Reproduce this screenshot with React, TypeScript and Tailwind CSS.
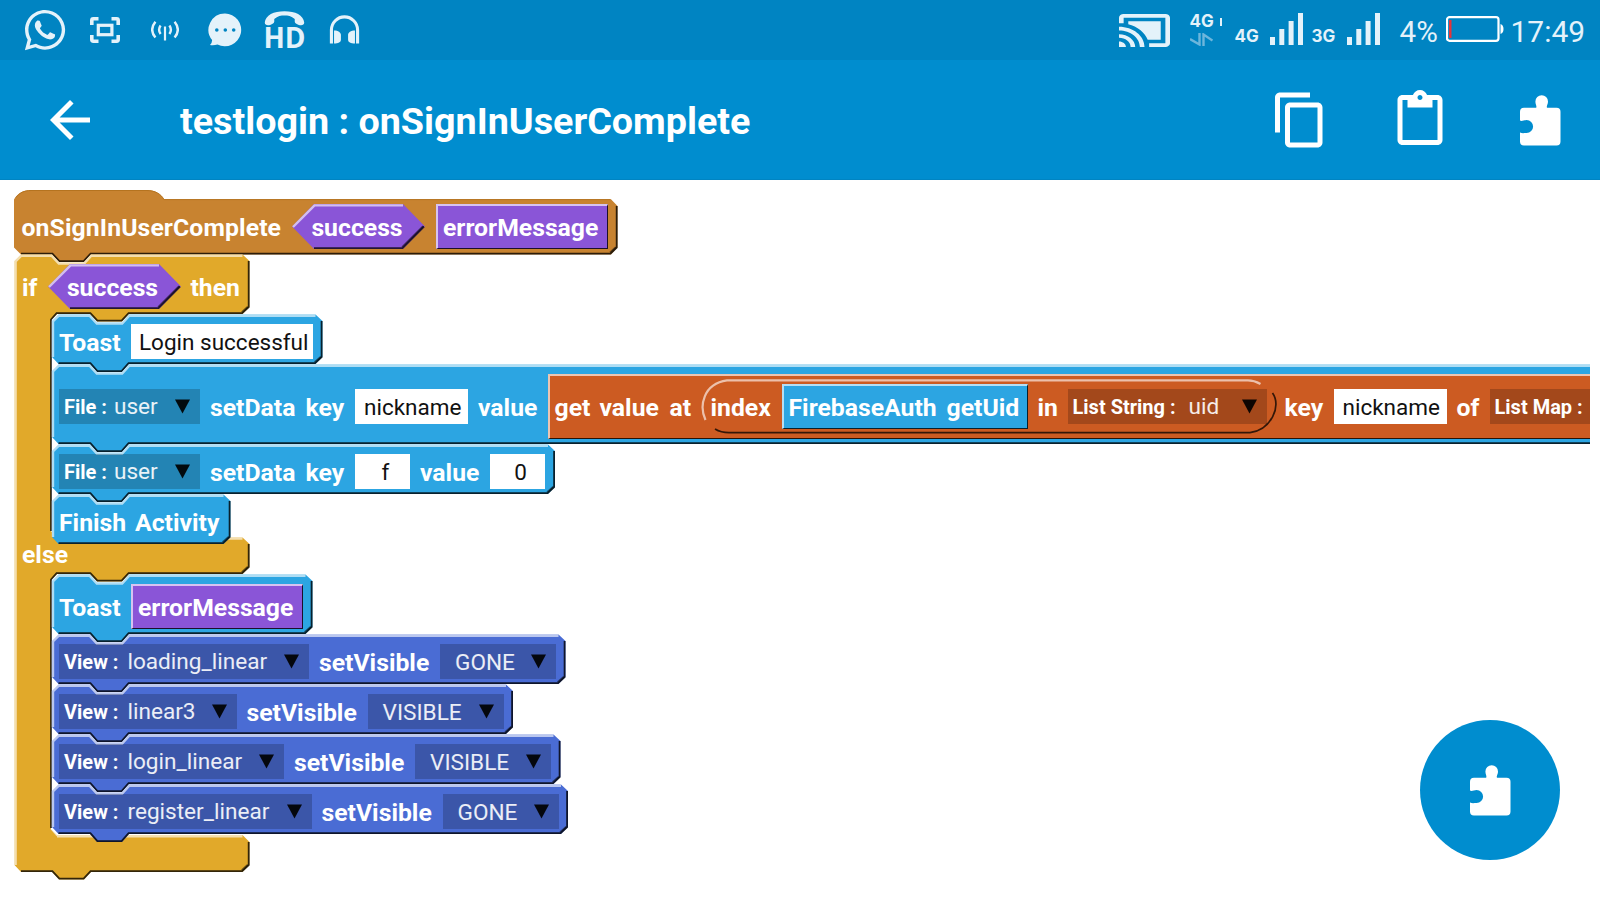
import type { ReactNode } from "react";
import { FaWhatsapp } from "react-icons/fa";

const EDGE = 7;
const NOTCH = 8;

const COLORS = {
  blue: "#2ca5e2",
  view: "#4a6cd4",
  event: "#c88330",
  control: "#e1a92a",
};

/* ---------- block outlines ---------- */

function StackShape({ w, h, fill, last }: { w: number; h: number; fill: string; last?: boolean }) {
  const nub = last ? "" : `H77L70 ${h + NOTCH}H45L38 ${h}`;
  const nubLine = last ? "" : `H76.6L69.6 ${h + NOTCH - 0.9}H45.4L38.4 ${h - 0.9}`;
  return (
    <svg className="absolute left-0 top-0 overflow-visible" width={w} height={h} fill="none">
      <path
        fill={fill}
        d={`M0 ${EDGE}L6.5 0.5H38L45 ${NOTCH + 0.5}H70L77 0.5H${w - EDGE}L${w} ${EDGE}V${h - EDGE}L${w - EDGE} ${h}${nub}H6.5L0 ${h - EDGE}Z`}
      />
      <path
        stroke="#fff"
        strokeOpacity="0.62"
        strokeWidth="2.4"
        d={`M1 ${h - EDGE}V7.5L6.8 1.7H37.5L44.8 9.5H70.2L77.3 1.7H${w - EDGE}`}
      />
      <path
        stroke="#000"
        strokeOpacity="0.8"
        strokeWidth="1.8"
        d={`M${w - 0.9} ${EDGE}V${h - EDGE}L${w - EDGE - 0.4} ${h - 0.9}${nubLine}H6.5`}
      />
      <path stroke="#000" strokeOpacity="0.5" strokeWidth="1.6" d={`M${w - 1.8} ${h - EDGE - 0.5}L${w - EDGE - 1} ${h - 2}`} />
    </svg>
  );
}

function HatShape() {
  return (
    <svg className="absolute left-0 top-0 overflow-visible" width="603" height="64" fill="none">
      <path
        fill={COLORS.event}
        d="M0 9.5C3 4 9 0 17 0H133C141 0 147 4 150 9.2H597L603.5 16V57.5L597 64.5H77L70 72H45L38 64.5H7L0 57.5Z"
      />
      <path stroke="#b5731f" strokeWidth="1" d="M2 7.5C5 3 10 .5 17 .5H133C141 .5 147 4 150 9.6H596.5" />
      <path
        stroke="#000"
        strokeOpacity="0.78"
        strokeWidth="1.8"
        d="M602.7 16V57.5L596.5 63.6H76.6L69.6 71.1H45.4L38.4 63.6H7"
      />
      <path stroke="#000" strokeOpacity="0.5" strokeWidth="1.6" d="M601.7 57L596 62.4" />
    </svg>
  );
}

function IfElseShape() {
  return (
    <svg className="absolute left-0 top-0 overflow-visible" width="236" height="618" fill="none">
      <path
        fill={COLORS.control}
        d="M0.5 7L7 0.5H38L45 8.5H70L77 0.5H228.500L235.500 7V53L228.500 60H115L108 67.500H83L76 60H43L37 66V277L43 283.500H228.500L235.500 290V313L228.500 320H115L108 327.500H83L76 320H43L37 326V575L43 581H228.500L235.500 588V611L228.500 618H77L70 625.500H45L38 618H7L0.500 611Z"
      />
      <path
        stroke="#fff"
        strokeOpacity="0.62"
        strokeWidth="2.4"
        d="M1.6 611V7.5L7.3 1.7H37.5L44.8 9.5H70.2L77.3 1.7H228.5M43 284.6H228.5M37.5 574.5L43.5 581.5M43 582.2H228.5"
      />
      <path
        stroke="#000"
        strokeOpacity="0.78"
        strokeWidth="1.8"
        d="M234.7 7V53L228.2 59.2H114.6L107.6 66.6H83.4L76.4 59.2H42.6L37 65.5V277M234.7 290V313L228.2 319.2H114.6L107.6 326.6H83.4L76.4 319.2H42.6L37 325.5V574M234.7 588V611L228.2 617.2H76.6L69.6 624.6H45.4L38.4 617.2H7"
      />
      <path stroke="#000" strokeOpacity="0.5" strokeWidth="1.6" d="M233.7 52.6L227.7 58.2M233.7 312.6L227.7 318.2M233.7 610.6L227.7 616.2" />
    </svg>
  );
}

/* ---------- block parts ---------- */

function Label({ className = "", children }: { className?: string; children: ReactNode }) {
  return (
    <span className={`shrink-0 pt-px whitespace-nowrap text-[24.75px] leading-[35px] font-bold text-white ${className}`}>
      {children}
    </span>
  );
}

function Field({ className = "", children }: { className?: string; children: ReactNode }) {
  return (
    <span className={`h-[35px] shrink-0 bg-white whitespace-nowrap text-[22.5px] leading-[36px] text-[#111] ${className}`}>
      {children}
    </span>
  );
}

function Triangle() {
  return (
    <svg width="15" height="15" viewBox="0 0 15 15" className="mt-[-1px] shrink-0">
      <path d="M0 .5H15L7.5 14.5Z" fill="#000" fillOpacity="0.92" />
    </svg>
  );
}

function Dropdown({ className = "", gap = "gap-[9px]", kind, value }: { className?: string; gap?: string; kind?: string; value?: string }) {
  return (
    <span className={`flex h-[35px] shrink-0 items-center justify-between bg-black/20 pr-[10px] pl-[5px] whitespace-nowrap ${className}`}>
      <span className={`flex items-baseline pt-px ${gap}`}>
        {kind && <span className="text-[20px] leading-[35px] font-bold text-white">{kind}</span>}
        <span className="text-[22.6px] leading-[35px] text-white/90">{value}</span>
      </span>
      <Triangle />
    </span>
  );
}

function Plate({ className = "", children }: { className?: string; children: ReactNode }) {
  return (
    <span
      className={`flex h-[45px] shrink-0 items-center border-t-2 border-r border-b border-l-2 border-t-white/65 border-r-black/80 border-b-black/80 border-l-white/65 pb-px ${className}`}
    >
      {children}
    </span>
  );
}

function Hexagon({ className = "", children }: { className?: string; children: ReactNode }) {
  return (
    <span className={`relative flex h-[45px] w-[133px] shrink-0 items-center justify-center ${className}`}>
      <svg className="absolute inset-0" width="133" height="45" fill="none">
        <path fill="#8a55d7" d="M0 22.5L22 0H111L133 22.5L111 45H22Z" />
        <path stroke="#fff" strokeOpacity="0.62" strokeWidth="2.4" d="M1 23L22.5 1.4H111" />
        <path stroke="#000" strokeOpacity="0.75" strokeWidth="1.8" d="M132 22.5L110.6 44.1H22" />
        <path stroke="#000" strokeOpacity="0.55" strokeWidth="1.5" d="M131 22L110 43" />
      </svg>
      <Label className="relative pr-[3px]">{children}</Label>
    </span>
  );
}

interface BlockProps {
  w: number;
  h: number;
  fill: string;
  className: string;
  last?: boolean;
  children: ReactNode;
}

function Block({ w, h, fill, className, last, children }: BlockProps) {
  return (
    <div className={`relative shrink-0 ${className}`}>
      <StackShape w={w} h={h} fill={fill} last={last} />
      <div className="relative flex h-full items-center pt-[10px] pb-[5px] pl-[7px]">{children}</div>
    </div>
  );
}

function SetVisible({ view, viewClass, state, stateClass, w }: { view: string; viewClass: string; state: string; stateClass: string; w: number }) {
  return (
    <Block w={w} h={50} fill={COLORS.view} className="h-[50px]">
      <Dropdown kind="View :" value={view} className={viewClass} />
      <Label className="ml-[10px] w-[121px]">setVisible</Label>
      <Dropdown value={state} className={stateClass} />
    </Block>
  );
}

/* ---------- icons ---------- */

function PuzzleIcon() {
  return (
    <svg width="41" height="51" viewBox="0 0 41 51" fill="#fff">
      <path d="M4 12.7H16.2C17 11 15.4 9.6 15.4 6.5A6.3 6.3 0 0 1 28 6.5C28 9.6 26.2 11 27 12.7H36.5A4 4 0 0 1 40.5 16.7V46.5A4 4 0 0 1 36.5 50.5H4A4 4 0 0 1 0 46.5V37.4C2 38.6 4 38 6.6 38A6.4 6.4 0 0 0 6.6 25C4 25 2 26.6 0 25.6V16.7A4 4 0 0 1 4 12.7Z" />
    </svg>
  );
}

function SignalBars() {
  return (
    <svg width="33" height="32" viewBox="0 0 33 32" fill="#e4f2fa">
      <path d="M0 24H5V32H0ZM9.3 16H14.3V32H9.3ZM18.6 8H23.6V32H18.6ZM28 0H33V32H28Z" />
    </svg>
  );
}

function StatusBar() {
  return (
    <header className="flex h-[60px] items-start justify-between bg-[#0084c2] text-[#e4f2fa]">
      <div className="flex h-[60px] items-center">
        <FaWhatsapp className="ml-[22px] size-[46px]" />
        <svg className="ml-[22px]" width="30" height="26" viewBox="0 0 30 26" fill="none" stroke="#e4f2fa" strokeWidth="3.6">
          <path d="M1.8 8V3.4Q1.8 1.8 3.4 1.8H8.5M21.5 1.8H26.6Q28.2 1.8 28.2 3.4V8M28.2 18V22.6Q28.2 24.2 26.6 24.2H21.5M8.5 24.2H3.4Q1.8 24.2 1.8 22.6V18" />
          <rect x="8.3" y="8.3" width="13.6" height="9.4" strokeWidth="3.2" />
        </svg>
        <svg className="ml-[31px] mt-[2px]" width="28" height="20" viewBox="0 0 28 20" fill="none" stroke="#e4f2fa" strokeWidth="2.4">
          <path d="M14 5.5V19.5" strokeWidth="2.2" />
          <path d="M9.6 4.5Q6.6 8.8 9.6 13M18.4 4.5Q21.4 8.8 18.4 13M4.4 .8Q-2 8.8 4.4 16.6M23.6 .8Q30 8.8 23.6 16.6" />
        </svg>
        <svg className="ml-[29px]" width="34" height="34" viewBox="0 0 34 34">
          <path fill="#e4f2fa" d="M17 .5A16.4 16.4 0 1 1 9.5 31.6Q5.5 32.6 2 32Q4.2 29.8 4.1 27.1A16.4 16.4 0 0 1 17 .5Z" />
          <g fill="#0084c2">
            <circle cx="8.8" cy="17" r="1.8" />
            <circle cx="17.3" cy="17" r="1.8" />
            <circle cx="25.7" cy="17" r="1.8" />
          </g>
        </svg>
        <div className="relative ml-[22px] flex h-[40px] w-[41px] items-end justify-center overflow-visible pb-[2px]">
          <svg className="absolute top-0 left-0" width="41" height="16" viewBox="0 0 42 16" fill="#e4f2fa">
            <path d="M.8 12.5C1.5 5 10 1 21 1S40.500 5 41.200 12.500C41.200 14.500 39.800 15.300 38 15.300C35 15.300 31.500 13.500 31.500 11.500V9C28 6 24.500 5.500 21 5.500S14 6 10.500 9V11.500C10.500 13.500 7 15.300 4 15.300C2.200 15.300 .8 14.500 .8 12.500Z" />
          </svg>
          <span className="font-['Open_Sans'] text-[28px] leading-[22px] font-bold">HD</span>
        </div>
        <svg className="ml-[24px]" width="31" height="30" viewBox="0 0 32 30">
          <path fill="none" stroke="#e4f2fa" strokeWidth="3.2" d="M2.5 29V15A13.500 13.500 0 0 1 29.500 15V29" />
          <path fill="#e4f2fa" d="M5.200 15.500C9.500 15.500 12.300 17.500 12.300 20V25C12.300 27.500 9.500 29 5.200 29ZM26.800 15.500C22.500 15.500 19.700 17.500 19.700 20V25C19.700 27.500 22.500 29 26.800 29Z" />
        </svg>
      </div>

      <div className="flex h-[60px] items-start pr-[15px]">
        <svg className="mt-[14px]" width="51" height="33" viewBox="1 3 22 18" preserveAspectRatio="none" fill="#e4f2fa">
          <path d="M1 18v3h3c0-1.66-1.34-3-3-3zm0-4v2c2.760 0 5 2.240 5 5h2c0-3.870-3.130-7-7-7zm18-7H5v1.630c3.960 1.280 7.090 4.410 8.370 8.370H19V7zM1 10v2c4.970 0 9 4.030 9 9h2c0-6.080-4.930-11-11-11zm20-7H3c-1.100 0-2 .9-2 2v3h2V5h18v14h-7v2h7c1.100 0 2-.9 2-2V5c0-1.100-.9-2-2-2z" />
        </svg>
        <div className="mt-[13px] ml-[20px] w-[45px]">
          <div className="flex items-center gap-[6px]">
            <span className="font-['Inter'] text-[17px] leading-[17px] font-bold">4G</span>
            <span className="h-[8px] w-[2px] bg-[#e4f2fa]" />
          </div>
          <svg className="mt-[3px]" width="23" height="13" viewBox="0 0 23 13" fill="none" stroke="#6db6dc" strokeWidth="2.400">
            <path d="M0 6L9.500 11.500V0M13.500 13V1.500L22.500 7.500" />
          </svg>
        </div>
        <span className="mt-[28px] w-[35px] font-['Inter'] text-[17px] leading-[17px] font-bold">4G</span>
        <div className="mt-[13px]">
          <SignalBars />
        </div>
        <span className="mt-[28px] ml-[9px] w-[35px] font-['Inter'] text-[17px] leading-[17px] font-bold">3G</span>
        <div className="mt-[13px]">
          <SignalBars />
        </div>
        <span className="mt-[14px] ml-[20px] w-[46px] text-[29.500px] leading-[36px]">4%</span>
        <svg className="mt-[16px]" width="58" height="26" viewBox="0 0 58 26" fill="none">
          <rect x="1" y="1.200" width="51.500" height="23.600" rx="2.500" stroke="#fff" strokeWidth="2.200" />
          <rect x="3" y="4" width="2.500" height="18" fill="#e5343a" />
          <path d="M54.500 8Q57.500 9 57.500 13T54.500 18Z" fill="#fff" />
        </svg>
        <span className="mt-[14px] ml-[7px] text-[29.900px] leading-[36px]">17:49</span>
      </div>
    </header>
  );
}

function AppBar() {
  return (
    <nav className="flex h-[120px] items-center border-b border-[#0084c2] bg-[#008dcf]">
      <svg className="mt-px ml-[40px]" width="60" height="60" viewBox="0 0 24 24" fill="#fff">
        <path d="M20 11H7.830l5.590-5.590L12 4l-8 8 8 8 1.410-1.410L7.830 13H20v-2z" />
      </svg>
      <h1 className="ml-[80px] flex-1 pt-[3px] text-[37.700px] leading-[60px] font-bold text-white">testlogin : onSignInUserComplete</h1>
      <svg className="mt-px" width="60" height="60" viewBox="0 0 24 24" fill="#fff">
        <path d="M16 1H4c-1.100 0-2 .9-2 2v14h2V3h12V1zm3 4H8c-1.100 0-2 .9-2 2v14c0 1.100.9 2 2 2h11c1.100 0 2-.9 2-2V7c0-1.100-.9-2-2-2zm0 16H8V7h11v14z" />
      </svg>
      <svg className="mt-px ml-[60px]" width="60" height="60" viewBox="0 0 24 24" fill="#fff">
        <path d="M19 2h-4.180C14.400.84 13.300 0 12 0c-1.300 0-2.400.84-2.820 2H5c-1.100 0-2 .9-2 2v16c0 1.100.9 2 2 2h14c1.100 0 2-.9 2-2V4c0-1.100-.9-2-2-2zm-7 0c.55 0 1 .45 1 1s-.45 1-1 1-1-.45-1-1 .45-1 1-1zm7 18H5V4h2v3h10V4h2v16z" />
      </svg>
      <div className="mt-[2px] mr-[39px] ml-[70px]">
        <PuzzleIcon />
      </div>
    </nav>
  );
}

/* ---------- the list lookup nested inside the wide block ---------- */

function GetValueAt() {
  return (
    <span className="flex h-[65px] w-[1300px] shrink-0 items-center border-t-2 border-b border-l-2 border-t-white/65 border-b-black/80 border-l-white/65 bg-[#cc5b22] pb-px pl-[5px]">
      <Label className="w-[45px]">get</Label>
      <Label className="w-[70px]">value</Label>
      <Label className="w-[31px]">at</Label>
      <span className="relative flex h-[55px] w-[576px] shrink-0 items-center pl-[10px]">
        <svg className="absolute inset-0" width="576" height="55" fill="none">
          <path stroke="#fff" strokeOpacity="0.62" strokeWidth="2.200" d="M4.500 41C-2 27 2 5 26 1.400H547Q553 1.400 559.500 5" />
          <path stroke="#000" strokeOpacity="0.75" strokeWidth="1.700" d="M14 50Q20 53.700 28 53.700H549C570 51 581 27 571.500 14" />
        </svg>
        <Label className="relative w-[71px]">index</Label>
        <Plate className="relative w-[246px] bg-[#2ca5e2] pl-[5px]">
          <Label className="w-[158px]">FirebaseAuth</Label>
          <Label>getUid</Label>
        </Plate>
        <Label className="relative ml-[10px] w-[30px]">in</Label>
        <Dropdown kind="List String :" value="uid" gap="gap-[13px]" className="relative w-[199px]" />
      </span>
      <Label className="ml-[8px] w-[49px]">key</Label>
      <Field className="w-[113px] pl-[9px]">nickname</Field>
      <Label className="ml-[10px] w-[33px]">of</Label>
      <Dropdown kind="List Map :" value="" className="w-[240px]" />
    </span>
  );
}

function Workspace() {
  return (
    <section className="flex h-[720px] w-[1590px] flex-col overflow-hidden pt-[10px] pl-[14px]">
      <div className="relative h-[64px] shrink-0">
        <HatShape />
        <div className="relative flex h-full items-center pt-[14px] pb-[5px] pl-[7.500px]">
          <Label className="w-[270.500px] tracking-[0.11px]">onSignInUserComplete</Label>
          <Hexagon>success</Hexagon>
          <Plate className="ml-[11px] w-[171.500px] bg-[#8a55d7] pl-[5px]">
            <Label>errorMessage</Label>
          </Plate>
        </div>
      </div>

      <div className="relative shrink-0">
        <IfElseShape />
        <div className="relative flex h-[60px] items-center pt-[10px] pb-[5px] pl-[8px]">
          <Label className="w-[25.500px]">if</Label>
          <Hexagon>success</Hexagon>
          <Label className="ml-[10px]">then</Label>
        </div>

        <div className="flex h-[230px] flex-col pl-[38px]">
          <Block w={270.500} h={50} fill={COLORS.blue} className="h-[50px]">
            <Label className="w-[72px]">Toast</Label>
            <Field className="w-[182px] pl-[8px]">Login successful</Field>
          </Block>
          <Block w={1700} h={80} fill={COLORS.blue} className="h-[80px]">
            <Dropdown kind="File :" value="user" gap="gap-[7px]" className="w-[141px]" />
            <Label className="ml-[10px] w-[95.500px]">setData</Label>
            <Label className="w-[49.500px]">key</Label>
            <Field className="w-[113px] pl-[9px]">nickname</Field>
            <Label className="ml-[10px] w-[69.500px]">value</Label>
            <GetValueAt />
          </Block>
          <Block w={503} h={50} fill={COLORS.blue} className="h-[50px]">
            <Dropdown kind="File :" value="user" gap="gap-[7px]" className="w-[141px]" />
            <Label className="ml-[10px] w-[95.500px]">setData</Label>
            <Label className="w-[49.500px]">key</Label>
            <Field className="w-[55px] pl-[6px] text-center">f</Field>
            <Label className="ml-[10px] w-[70px]">value</Label>
            <Field className="w-[55px] pl-[6px] text-center">0</Field>
          </Block>
          <Block w={178.500} h={50} fill={COLORS.blue} className="h-[50px]" last>
            <Label className="w-[76px]">Finish</Label>
            <Label>Activity</Label>
          </Block>
        </div>

        <div className="relative flex h-[30px] items-start pl-[8px]">
          <Label className="-mt-[8px]">else</Label>
        </div>

        <div className="flex h-[260px] flex-col pl-[38px]">
          <Block w={260.500} h={60} fill={COLORS.blue} className="h-[60px]">
            <Label className="w-[72px]">Toast</Label>
            <Plate className="w-[171.500px] bg-[#8a55d7] pl-[5px]">
              <Label>errorMessage</Label>
            </Plate>
          </Block>
          <SetVisible w={513.5} view="loading_linear" viewClass="w-[250px]" state="GONE" stateClass="w-[116px] pl-[15px]" />
          <SetVisible w={461} view="linear3" viewClass="w-[177.500px]" state="VISIBLE" stateClass="w-[136px] pl-[15px]" />
          <SetVisible w={508.5} view="login_linear" viewClass="w-[225px]" state="VISIBLE" stateClass="w-[136px] pl-[15px]" />
          <SetVisible w={516} view="register_linear" viewClass="w-[252.500px]" state="GONE" stateClass="w-[116px] pl-[15px]" />
        </div>
      </div>
    </section>
  );
}

export default function App() {
  return (
    <div className="relative h-[900px] w-[1600px] overflow-hidden bg-white font-['Roboto',sans-serif]">
      <StatusBar />
      <AppBar />
      <Workspace />
      <button className="absolute right-[40px] bottom-[40px] flex size-[140px] items-center justify-center rounded-full bg-[#008dcf] pl-[1px]">
        <PuzzleIcon />
      </button>
    </div>
  );
}
